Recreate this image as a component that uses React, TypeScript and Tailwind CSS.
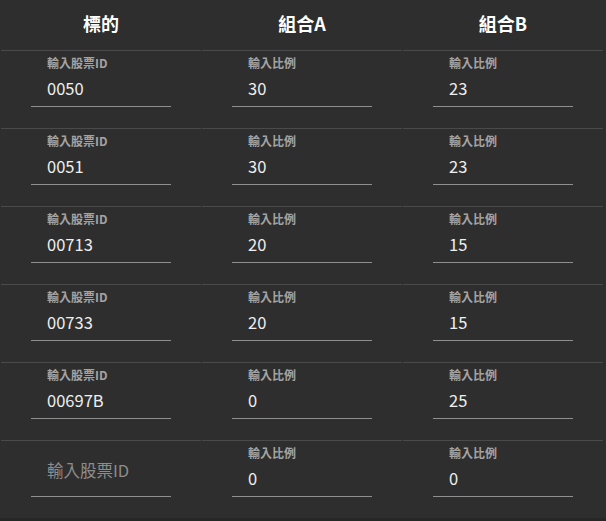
import React from 'react'

type Row = {
  id: string
  a: string
  b: string
}

const rows: Row[] = [
  { id: '0050', a: '30', b: '23' },
  { id: '0051', a: '30', b: '23' },
  { id: '00713', a: '20', b: '15' },
  { id: '00733', a: '20', b: '15' },
  { id: '00697B', a: '0', b: '25' },
  { id: '', a: '0', b: '0' },
]

const font = { fontFamily: '"Noto Sans CJK TC", "Noto Sans", sans-serif' }

function Field({ label, value }: { label: string; value: string }) {
  // empty value -> label sits in the input like a placeholder
  if (!value) {
    return (
      <div className="mx-auto w-[140px] border-b border-[#8f8f8f]">
        <div className="h-[55px] pl-4 pt-[18px] text-[16.5px] leading-[22px] text-[#8c8c8c]">
          {label}
        </div>
      </div>
    )
  }
  return (
    <div className="mx-auto w-[140px] border-b border-[#8f8f8f] pb-[7px] pl-4">
      <div className="mt-[4px] h-[16px] text-[12px] font-bold leading-[16px] text-[#a3a3a3]">
        {label}
      </div>
      <div className="mt-[7px] h-[21px] text-[16.5px] leading-[21px] text-[#efefef]">{value}</div>
    </div>
  )
}

export default function App() {
  return (
    <div className="h-screen w-full bg-[#272727]" style={font}>
      <div className="bg-[#2e2e2e] pl-px">
        <div className="grid h-[50px] grid-cols-[200px_200px_200px] gap-x-px">
          {['標的', '組合A', '組合B'].map((h) => (
            <div key={h} className="flex items-center justify-center pb-[4px] text-[18px] font-bold text-white">
              {h}
            </div>
          ))}
        </div>
        {rows.map((r, i) => (
          <div key={i} className="grid h-[78px] grid-cols-[200px_200px_200px] gap-x-px">
            <div className="border-t border-[#4a4a4a]">
              <Field label="輸入股票ID" value={r.id} />
            </div>
            <div className="border-t border-[#4a4a4a]">
              <Field label="輸入比例" value={r.a} />
            </div>
            <div className="border-t border-[#4a4a4a]">
              <Field label="輸入比例" value={r.b} />
            </div>
          </div>
        ))}
      </div>
    </div>
  )
}
